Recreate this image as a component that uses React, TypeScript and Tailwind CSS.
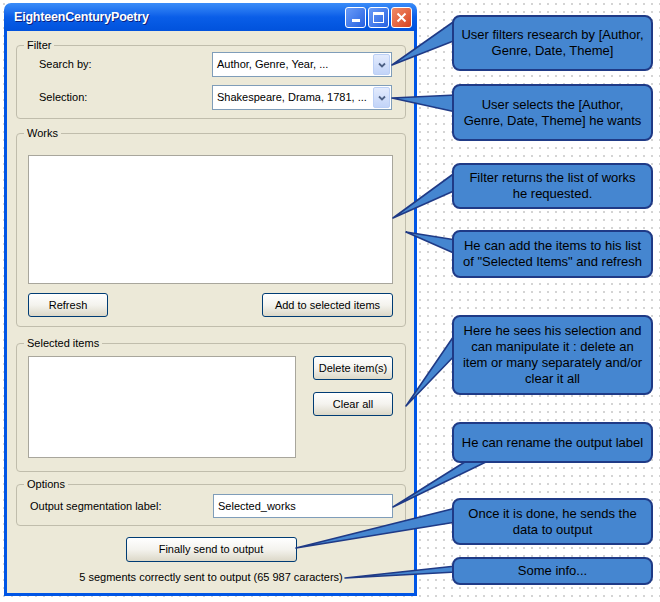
import React from 'react';

// Annotated mock-up of the EighteenCenturyPoetry widget

const ui = { fontFamily: '"Liberation Sans", Arial, sans-serif' };

function XpButton({ label, className = '' }: { label: string; className?: string }) {
  return (
    <button
      className={`h-[24px] rounded-[3px] border border-[#003c74] bg-gradient-to-b from-white via-[#f4f3ee] to-[#dcd8c8] text-[11px] text-black ${className}`}
    >
      {label}
    </button>
  );
}

function Combo({ value }: { value: string }) {
  return (
    <div className="flex h-[25px] w-[180px] items-center justify-between border border-[#7f9db9] bg-white pl-[4px] pr-[1px]">
      <span className="text-[11px] text-black">{value}</span>
      <div className="flex h-[21px] w-[17px] items-center justify-center rounded-[2px] border border-[#bcd0f6] bg-gradient-to-b from-[#e3ebfd] to-[#c2d4f8]">
        <svg width="10" height="10" viewBox="0 0 10 10">
          <path d="M2 3.5 L5 6.5 L8 3.5" fill="none" stroke="#4d6185" strokeWidth="1.8" />
        </svg>
      </div>
    </div>
  );
}

function GroupBox({
  title,
  className = '',
  children,
}: {
  title: string;
  className?: string;
  children: React.ReactNode;
}) {
  return (
    <div className={`relative rounded-[4px] border border-[#c0bdac] ${className}`}>
      <span className="absolute -top-[8px] left-[7px] bg-[#ece9d8] px-[3px] text-[11px] leading-[14px] text-black">
        {title}
      </span>
      {children}
    </div>
  );
}

function Callout({ lines, className = '' }: { lines: string[]; className?: string }) {
  return (
    <div
      className={`relative z-10 flex w-[201px] flex-col items-center justify-center rounded-[8px] border-2 border-[#1f3a86] bg-[#4586d0] text-center text-[13px] leading-[16px] text-black ${className}`}
    >
      {lines.map((l) => (
        <span key={l} className="whitespace-nowrap">
          {l}
        </span>
      ))}
    </div>
  );
}

const tails: string[] = [
  '392,65 456,20 456,40',
  '392,98 456,95 456,112',
  '393,218 456,172 456,190',
  '406,232 456,240 456,254',
  '406,406 458,330 458,352',
  '393,507 468,460 490,460',
  '296,548 456,508 456,522',
  '345,578 456,566 456,572',
];

export default function App() {
  return (
    <div
      className="relative flex h-[602px] w-[660px] items-start overflow-hidden bg-white bg-[radial-gradient(circle,#d4d4d4_0.9px,transparent_1.2px)] bg-[length:8px_8px]"
      style={ui}
    >
      {/* Window */}
      <div className="ml-[4px] mt-[3px] flex w-[413px] flex-col">
        <div className="flex h-[28px] items-center justify-between rounded-t-[7px] bg-gradient-to-b from-[#3a8cf8] via-[#0a5ee8] to-[#0152dc] pl-[10px] pr-[5px]">
          <span className="text-[12.5px] font-bold tracking-[-0.2px] text-white [text-shadow:1px_1px_0_#0a1f80]">
            EighteenCenturyPoetry
          </span>
          <div className="flex gap-[2px]">
            <div className="flex h-[21px] w-[21px] items-end justify-center rounded-[3px] border border-white bg-gradient-to-br from-[#6b9cf8] to-[#2660e0] pb-[5px]">
              <div className="h-[3px] w-[8px] bg-white" />
            </div>
            <div className="flex h-[21px] w-[21px] items-center justify-center rounded-[3px] border border-white bg-gradient-to-br from-[#6b9cf8] to-[#2660e0]">
              <div className="h-[11px] w-[11px] border border-t-[3px] border-white" />
            </div>
            <div className="flex h-[21px] w-[21px] items-center justify-center rounded-[3px] border border-white bg-gradient-to-br from-[#f08a66] to-[#d7401c]">
              <svg width="11" height="11" viewBox="0 0 11 11">
                <path d="M1.5 1.5 L9.5 9.5 M9.5 1.5 L1.5 9.5" stroke="white" strokeWidth="2" />
              </svg>
            </div>
          </div>
        </div>

        <div className="flex h-[565px] flex-col border-x-[3px] border-b-[3px] border-[#0055e5] bg-[#ece9d8] pl-[9px] pr-[8px] pt-[14px]">
          {/* Filter */}
          <GroupBox title="Filter" className="flex flex-col gap-[8px] pb-[8px] pt-[6px]">
            <div className="flex items-center">
              <span className="w-[195px] pl-[22px] text-[11px] text-black">Search by:</span>
              <Combo value="Author, Genre, Year, ..." />
            </div>
            <div className="flex items-center">
              <span className="w-[195px] pl-[22px] text-[11px] text-black">Selection:</span>
              <Combo value="Shakespeare, Drama, 1781, ..." />
            </div>
          </GroupBox>

          {/* Works */}
          <GroupBox title="Works" className="mt-[14px] pb-[9px] pl-[11px] pr-[12px] pt-[21px]">
            <div className="h-[129px] border border-[#a8a69c] bg-white" />
            <div className="mt-[9px] flex justify-between">
              <XpButton label="Refresh" className="w-[80px]" />
              <XpButton label="Add to selected items" className="w-[131px]" />
            </div>
          </GroupBox>

          {/* Selected items */}
          <GroupBox title="Selected items" className="mt-[16px] flex gap-[17px] pb-[13px] pl-[11px] pr-[12px] pt-[12px]">
            <div className="h-[102px] w-[268px] border border-[#a8a69c] bg-white" />
            <div className="flex flex-col gap-[12px]">
              <XpButton label="Delete item(s)" className="w-[80px]" />
              <XpButton label="Clear all" className="w-[80px]" />
            </div>
          </GroupBox>

          {/* Options */}
          <GroupBox title="Options" className="mt-[12px] flex items-center pb-[7px] pt-[9px]">
            <span className="w-[196px] pl-[13px] text-[11px] text-black">Output segmentation label:</span>
            <div className="flex h-[24px] w-[180px] items-center border border-[#7f9db9] bg-white pl-[4px] text-[11px] text-black">
              Selected_works
            </div>
          </GroupBox>

          <div className="mt-[11px] flex justify-center">
            <XpButton label="Finally send to output" className="h-[25px] w-[171px]" />
          </div>
          <p className="mt-[9px] text-center text-[11px] leading-[13px] text-black">
            5 segments correctly sent to output (65 987 caracters)
          </p>
        </div>
      </div>

      {/* Callout tails */}
      <svg className="pointer-events-none absolute inset-0" width="660" height="602">
        {tails.map((p) => (
          <polygon key={p} points={p} fill="#4586d0" stroke="#1f3a86" strokeWidth="1.6" strokeLinejoin="round" />
        ))}
      </svg>

      {/* Callouts */}
      <div className="ml-[35px] flex flex-col">
        <Callout className="mt-[15px] h-[56px]" lines={['User filters research by [Author,', 'Genre, Date, Theme]']} />
        <Callout className="mt-[13px] h-[57px]" lines={['User selects the [Author,', 'Genre, Date, Theme] he wants']} />
        <Callout className="mt-[22px] h-[46px]" lines={['Filter returns the list of works', 'he requested.']} />
        <Callout
          className="mt-[21px] h-[48px]"
          lines={['He can add the items to his list', 'of "Selected Items" and refresh']}
        />
        <Callout
          className="mt-[37px] h-[80px]"
          lines={[
            'Here he sees his selection and',
            'can manipulate it : delete an',
            'item or many separately and/or',
            'clear it all',
          ]}
        />
        <Callout className="mt-[27px] h-[41px]" lines={['He can rename the output label']} />
        <Callout className="mt-[35px] h-[47px]" lines={['Once it is done, he sends the', 'data to output']} />
        <Callout className="mt-[12px] h-[28px]" lines={['Some info...']} />
      </div>
    </div>
  );
}
